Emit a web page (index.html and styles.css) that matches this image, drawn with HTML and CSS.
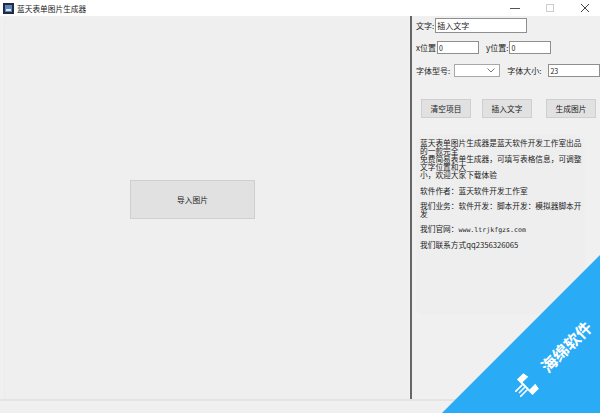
FILE: index.html
```html
<!DOCTYPE html>
<html lang="zh-CN">
<head>
  <meta charset="UTF-8" />
  <title>蓝天表单图片生成器</title>
  <link rel="stylesheet" href="styles.css">
</head>
<body>
  <div class="window">
    <div class="titlebar">
      <svg class="app-icon" width="11" height="11" viewBox="0 0 11 11">
        <rect width="11" height="11" fill="#1d2b45"/>
        <rect x="2" y="2" width="7" height="7" fill="#5d86b8"/>
        <rect x="3" y="6" width="5" height="2" fill="#dce6f2"/>
      </svg>
      <span class="title">蓝天表单图片生成器</span>
      <div class="controls">
        <svg width="10" height="10" viewBox="0 0 10 10"><path d="M0 5.5h10" stroke="#555" fill="none"/></svg>
        <svg width="10" height="10" viewBox="0 0 10 10"><rect x="1.5" y="1.5" width="7" height="7" stroke="#ccc" fill="none"/></svg>
        <svg width="10" height="10" viewBox="0 0 10 10"><path d="M1 1l8 8M9 1l-8 8" stroke="#444" fill="none"/></svg>
      </div>
    </div>
    <div class="main">
      <div class="canvas">
        <button class="btn import">导入图片</button>
      </div>
      <div class="side">
        <div class="row row-text">
          <label>文字:</label>
          <input class="field field-text" type="text" value="插入文字">
        </div>
        <div class="row row-pos">
          <label>x位置</label>
          <input class="field field-pos" type="text" value="0">
          <label class="label-y">y位置:</label>
          <input class="field field-pos" type="text" value="0">
        </div>
        <div class="row row-font">
          <label>字体型号:</label>
          <div class="select">
            <svg width="8" height="5" viewBox="0 0 8 5"><path d="M0.5 0.5L4 4l3.5-3.5" stroke="#777" fill="none"/></svg>
          </div>
          <label class="label-size">字体大小:</label>
          <input class="field field-size" type="text" value="23">
        </div>
        <div class="actions">
          <button class="btn">清空项目</button>
          <button class="btn">插入文字</button>
          <button class="btn btn-last">生成图片</button>
        </div>
        <div class="info">
          <p class="intro">蓝天表单图片生成器是蓝天软件开发工作室出品<br>的一款完全<br>免费简易表单生成器，可填写表格信息，可调整<br>文字位置和大<br>小，欢迎大家下载体验</p>
          <p>软件作者：蓝天软件开发工作室</p>
          <p>我们业务：软件开发：脚本开发：模拟器脚本开<br>发</p>
          <p>我们官网：<span class="mono">www.ltrjkfgzs.com</span></p>
          <p>我们联系方式qq2356326065</p>
        </div>
      </div>
    </div>
    <div class="statusbar"></div>
  </div>

  <div class="badge">
    <div class="badge-label">
      <svg width="24" height="24" viewBox="0 0 24 24">
        <path d="M10 1h9l1 6h-8v10h8l-1 6h-9z" fill="#fff"/>
        <path d="M0 8.5h10M2 12h8M0 15.5h10" stroke="#fff" stroke-width="1.6" fill="none"/>
      </svg>
      <span>海绵软件</span>
    </div>
  </div>
</body>
</html>
```

FILE: styles.css
```css
html, body {
  margin: 0;
  height: 100%;
  overflow: hidden;
}
body {
  font-family: "Noto Sans CJK SC", "Liberation Sans", sans-serif;
  font-size: 8px;
  color: #222;
  background-color: #f0f0f0;
}
.window {
  display: flex;
  flex-direction: column;
  height: 413px;
}
.titlebar {
  display: flex;
  align-items: center;
  height: 16px;
  padding-left: 3px;
  background-color: #fff;
  flex: none;
}
.title {
  margin-left: 3px;
  font-size: 7.7px;
}
.controls {
  display: flex;
  gap: 25px;
  margin-left: auto;
  margin-right: 10px;
}
.main {
  display: flex;
  flex: 1;
  min-height: 0;
}
.canvas {
  box-sizing: border-box;
  flex: none;
  width: 405px;
  margin-left: 4px;
  margin-top: 2px;
  padding: 162px 0 0 125px;
  border-left: 1px solid #ebebeb;
  background-color: #efefef;
}
.side {
  flex: 1;
  min-width: 0;
  border-left: 2px solid #666;
  padding-left: 4px;
  margin-left: 1px;
}
.btn {
  flex: none;
  padding: 0;
  height: 19px;
  width: 50px;
  font: inherit;
  font-size: 7.7px;
  color: #222;
  background-color: #e1e1e1;
  border: 1px solid #cfcfcf;
}
.import {
  width: 125px;
  height: 39px;
}
.row {
  display: flex;
  align-items: center;
  white-space: nowrap;
}
.row-text {
  height: 15px;
  margin-top: 2px;
}
.row-pos {
  height: 13px;
  margin-top: 8px;
}
.row-font {
  height: 13px;
  margin-top: 10px;
}
.field {
  box-sizing: border-box;
  flex: none;
  height: 13px;
  padding: 0 1px;
  font: inherit;
  font-size: 7px;
  color: #222;
  background-color: #fff;
  border: 1px solid #8f8f8f;
}
.field-text {
  width: 92px;
  height: 15px;
  margin-left: 1px;
  font-size: 8px;
}
.field-pos {
  width: 42px;
  margin-left: 1px;
}
.label-y {
  margin-left: 7px;
}
.select {
  box-sizing: border-box;
  flex: none;
  display: flex;
  align-items: center;
  justify-content: flex-end;
  width: 46px;
  height: 13px;
  margin-left: 4px;
  padding-right: 4px;
  background-color: #fff;
  border: 1px solid #a8a8a8;
}
.label-size {
  margin-left: 7px;
}
.field-size {
  width: 52px;
  margin-left: 7px;
}
.actions {
  display: flex;
  gap: 11px;
  margin-top: 22px;
  margin-left: 5px;
}
.btn-last {
  margin-left: 3px;
}
.info {
  box-sizing: border-box;
  width: 169px;
  height: 180px;
  margin-top: 17px;
  padding: 4px 0 0 4px;
  border-radius: 8px;
  background-color: #eeeeee;
  font-size: 7.7px;
  color: #1c1c1c;
}
.info p {
  margin: 0 0 7px;
  line-height: 8px;
}
.info .intro {
  margin-bottom: 8px;
}
.mono {
  font-family: "DejaVu Sans Mono", monospace;
  font-size: 6.6px;
}
.statusbar {
  flex: none;
  height: 12px;
  border-top: 2px solid #e4e4e4;
  background-color: #f0f0f0;
}
.badge {
  position: absolute;
  right: 0;
  bottom: 0;
  width: 158px;
  height: 158px;
  background-color: #29abf6;
  clip-path: polygon(100% 0, 100% 100%, 0 100%);
}
.badge-label {
  position: absolute;
  left: 61px;
  top: 92px;
  display: flex;
  align-items: center;
  gap: 12px;
  width: 100px;
  height: 24px;
  color: #fff;
  font-size: 16px;
  font-weight: 700;
  white-space: nowrap;
  transform: rotate(-45deg);
  transform-origin: center;
}
```
